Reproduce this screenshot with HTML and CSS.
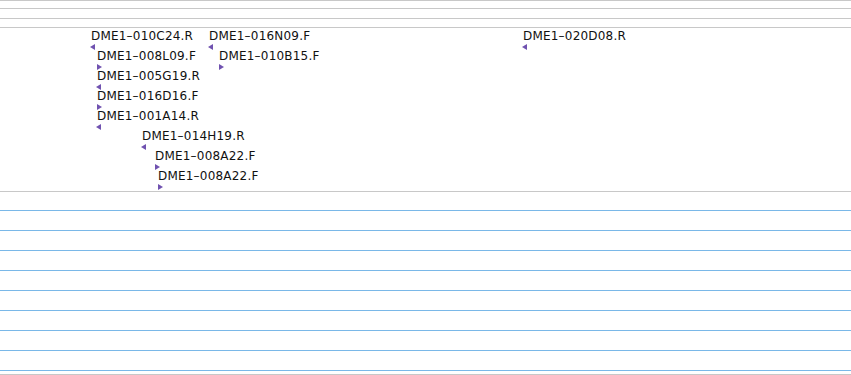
FILE: index.html
```html
<!DOCTYPE html>
<html>
<head>
    <title>Track view</title>
    <link rel="stylesheet" href="styles.css">
</head>
<body>
    <div class="ruler">
        <div class="ruler-band"></div>
        <div class="ruler-band"></div>
        <div class="ruler-band"></div>
    </div>

    <div class="track">
        <div class="track-row">
            <div class="feature" style="left: 91px"><span class="feature-name">DME1–010C24.R</span><span class="strand rev"></span></div>
            <div class="feature" style="left: 209px"><span class="feature-name">DME1–016N09.F</span><span class="strand rev"></span></div>
            <div class="feature" style="left: 523px"><span class="feature-name">DME1–020D08.R</span><span class="strand rev"></span></div>
        </div>
        <div class="track-row">
            <div class="feature" style="left: 97px"><span class="feature-name">DME1–008L09.F</span><span class="strand fwd"></span></div>
            <div class="feature" style="left: 219px"><span class="feature-name">DME1–010B15.F</span><span class="strand fwd"></span></div>
        </div>
        <div class="track-row">
            <div class="feature" style="left: 97px"><span class="feature-name">DME1–005G19.R</span><span class="strand rev"></span></div>
        </div>
        <div class="track-row">
            <div class="feature" style="left: 97px"><span class="feature-name">DME1–016D16.F</span><span class="strand fwd"></span></div>
        </div>
        <div class="track-row">
            <div class="feature" style="left: 97px"><span class="feature-name">DME1–001A14.R</span><span class="strand rev"></span></div>
        </div>
        <div class="track-row">
            <div class="feature" style="left: 142px"><span class="feature-name">DME1–014H19.R</span><span class="strand rev"></span></div>
        </div>
        <div class="track-row">
            <div class="feature" style="left: 155px"><span class="feature-name">DME1–008A22.F</span><span class="strand fwd"></span></div>
        </div>
        <div class="track-row">
            <div class="feature" style="left: 158px"><span class="feature-name">DME1–008A22.F</span><span class="strand fwd"></span></div>
        </div>
    </div>

    <div class="lanes">
        <div class="lane"></div>
        <div class="lane"></div>
        <div class="lane"></div>
        <div class="lane"></div>
        <div class="lane"></div>
        <div class="lane"></div>
        <div class="lane"></div>
        <div class="lane"></div>
        <div class="lane"></div>
    </div>
</body>
</html>
```

FILE: styles.css
```css
* {
    margin: 0;
    padding: 0;
    box-sizing: border-box;
}

body {
    width: 851px;
    height: 375px;
    background: #fff;
    font-family: 'DejaVu Sans', sans-serif;
    font-size: 12px;
    color: #111;
    overflow: hidden;
}

.ruler {
    border-top: 1px solid #c8c8c8;
}

.ruler-band {
    height: 9px;
    border-bottom: 1px solid #c8c8c8;
}

.ruler-band:first-child {
    height: 8px;
}

.ruler-band:nth-child(2) {
    height: 10px;
}

.track {
    height: 164px;
    padding-top: 1px;
    border-bottom: 1px solid #c8c8c8;
}

.track-row {
    position: relative;
    height: 20px;
}

.feature {
    position: absolute;
    top: 0;
    display: flex;
    flex-direction: column;
    align-items: flex-start;
}

.feature-name {
    line-height: 14px;
    letter-spacing: 0.2px;
    white-space: nowrap;
}

.strand {
    width: 0;
    height: 0;
    margin-top: 1px;
    border-top: 3px solid transparent;
    border-bottom: 3px solid transparent;
}

.strand.rev {
    margin-left: -1px;
    border-right: 5px solid #7052b0;
}

.strand.fwd {
    border-left: 5px solid #7052b0;
}

.lanes {
    padding-top: 18px;
    border-bottom: 1px solid #c8c8c8;
}

.lane {
    height: 20px;
    border-top: 1px solid #7ab8e8;
}

.lane:last-child {
    height: 4px;
}
```
